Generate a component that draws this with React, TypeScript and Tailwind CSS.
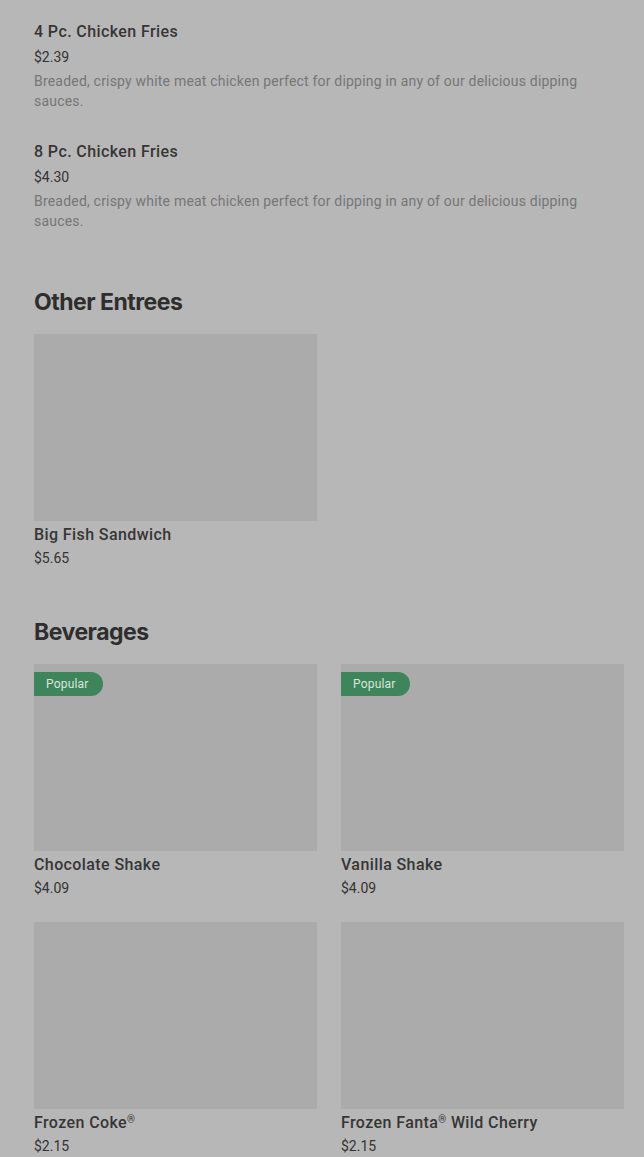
import React from "react";

type Item = { name: string; price: string; popular?: boolean };

const listItems = [
  { name: "4 Pc. Chicken Fries", price: "$2.39" },
  { name: "8 Pc. Chicken Fries", price: "$4.30" },
];

const desc = "Breaded, crispy white meat chicken perfect for dipping in any of our delicious dipping sauces.";

const entrees: Item[] = [{ name: "Big Fish Sandwich", price: "$5.65" }];

const beverages: Item[] = [
  { name: "Chocolate Shake", price: "$4.09", popular: true },
  { name: "Vanilla Shake", price: "$4.09", popular: true },
  { name: "Frozen Coke®", price: "$2.15" },
  { name: "Frozen Fanta® Wild Cherry", price: "$2.15" },
];

// render ® as a small raised mark like the menu does
function Name({ text }: { text: string }) {
  const parts = text.split("®");
  return (
    <>
      {parts.map((p, i) => (
        <React.Fragment key={i}>
          {p}
          {i < parts.length - 1 && <span className="relative -top-[5px] text-[10px] leading-none">®</span>}
        </React.Fragment>
      ))}
    </>
  );
}

function Card({ item }: { item: Item }) {
  return (
    <div className="flex flex-col">
      <div className="relative h-[187px] w-[283px] bg-[#ababab]">
        {item.popular && (
          <span className="absolute left-0 top-2 flex h-6 items-center rounded-r-full bg-[#3f855c] pl-3 pr-[14px] text-[12px] tracking-[0.2px] text-[#d8e6dc]">
            Popular
          </span>
        )}
      </div>
      <p className="mt-[2px] h-6 text-[16px] font-medium leading-6 tracking-[0.4px] text-[#363636]">
        <Name text={item.name} />
      </p>
      <p className="mt-[1px] text-[14px] leading-5 text-[#333]">{item.price}</p>
    </div>
  );
}

export default function App() {
  return (
    <div className="min-h-[1157px] overflow-hidden bg-[#b7b7b7] px-[34px] pt-[20px] font-['Roboto',sans-serif]">
      <div className="flex flex-col gap-[29px]">
        {listItems.map((it) => (
          <div key={it.name} className="flex flex-col">
            <p className="text-[16px] font-medium leading-6 tracking-[0.4px] text-[#363636]">{it.name}</p>
            <p className="mt-[3px] text-[14px] leading-5 text-[#333]">{it.price}</p>
            <p className="mt-[4px] text-[14px] leading-5 tracking-[0.2px] text-[#767676]">{desc}</p>
          </div>
        ))}
      </div>

      <h2 className="mt-[55px] font-['Inter',sans-serif] text-[23px] font-bold leading-8 tracking-[-0.5px] text-[#2e2e2e]">
        Other Entrees
      </h2>
      <div className="mt-[16px] grid grid-cols-[283px_283px] gap-6">
        {entrees.map((it) => (
          <Card key={it.name} item={it} />
        ))}
      </div>

      <h2 className="mt-[48px] font-['Inter',sans-serif] text-[23px] font-bold leading-8 tracking-[-0.5px] text-[#2e2e2e]">
        Beverages
      </h2>
      <div className="mt-[16px] grid grid-cols-[283px_283px] gap-6">
        {beverages.map((it) => (
          <Card key={it.name} item={it} />
        ))}
      </div>
    </div>
  );
}
